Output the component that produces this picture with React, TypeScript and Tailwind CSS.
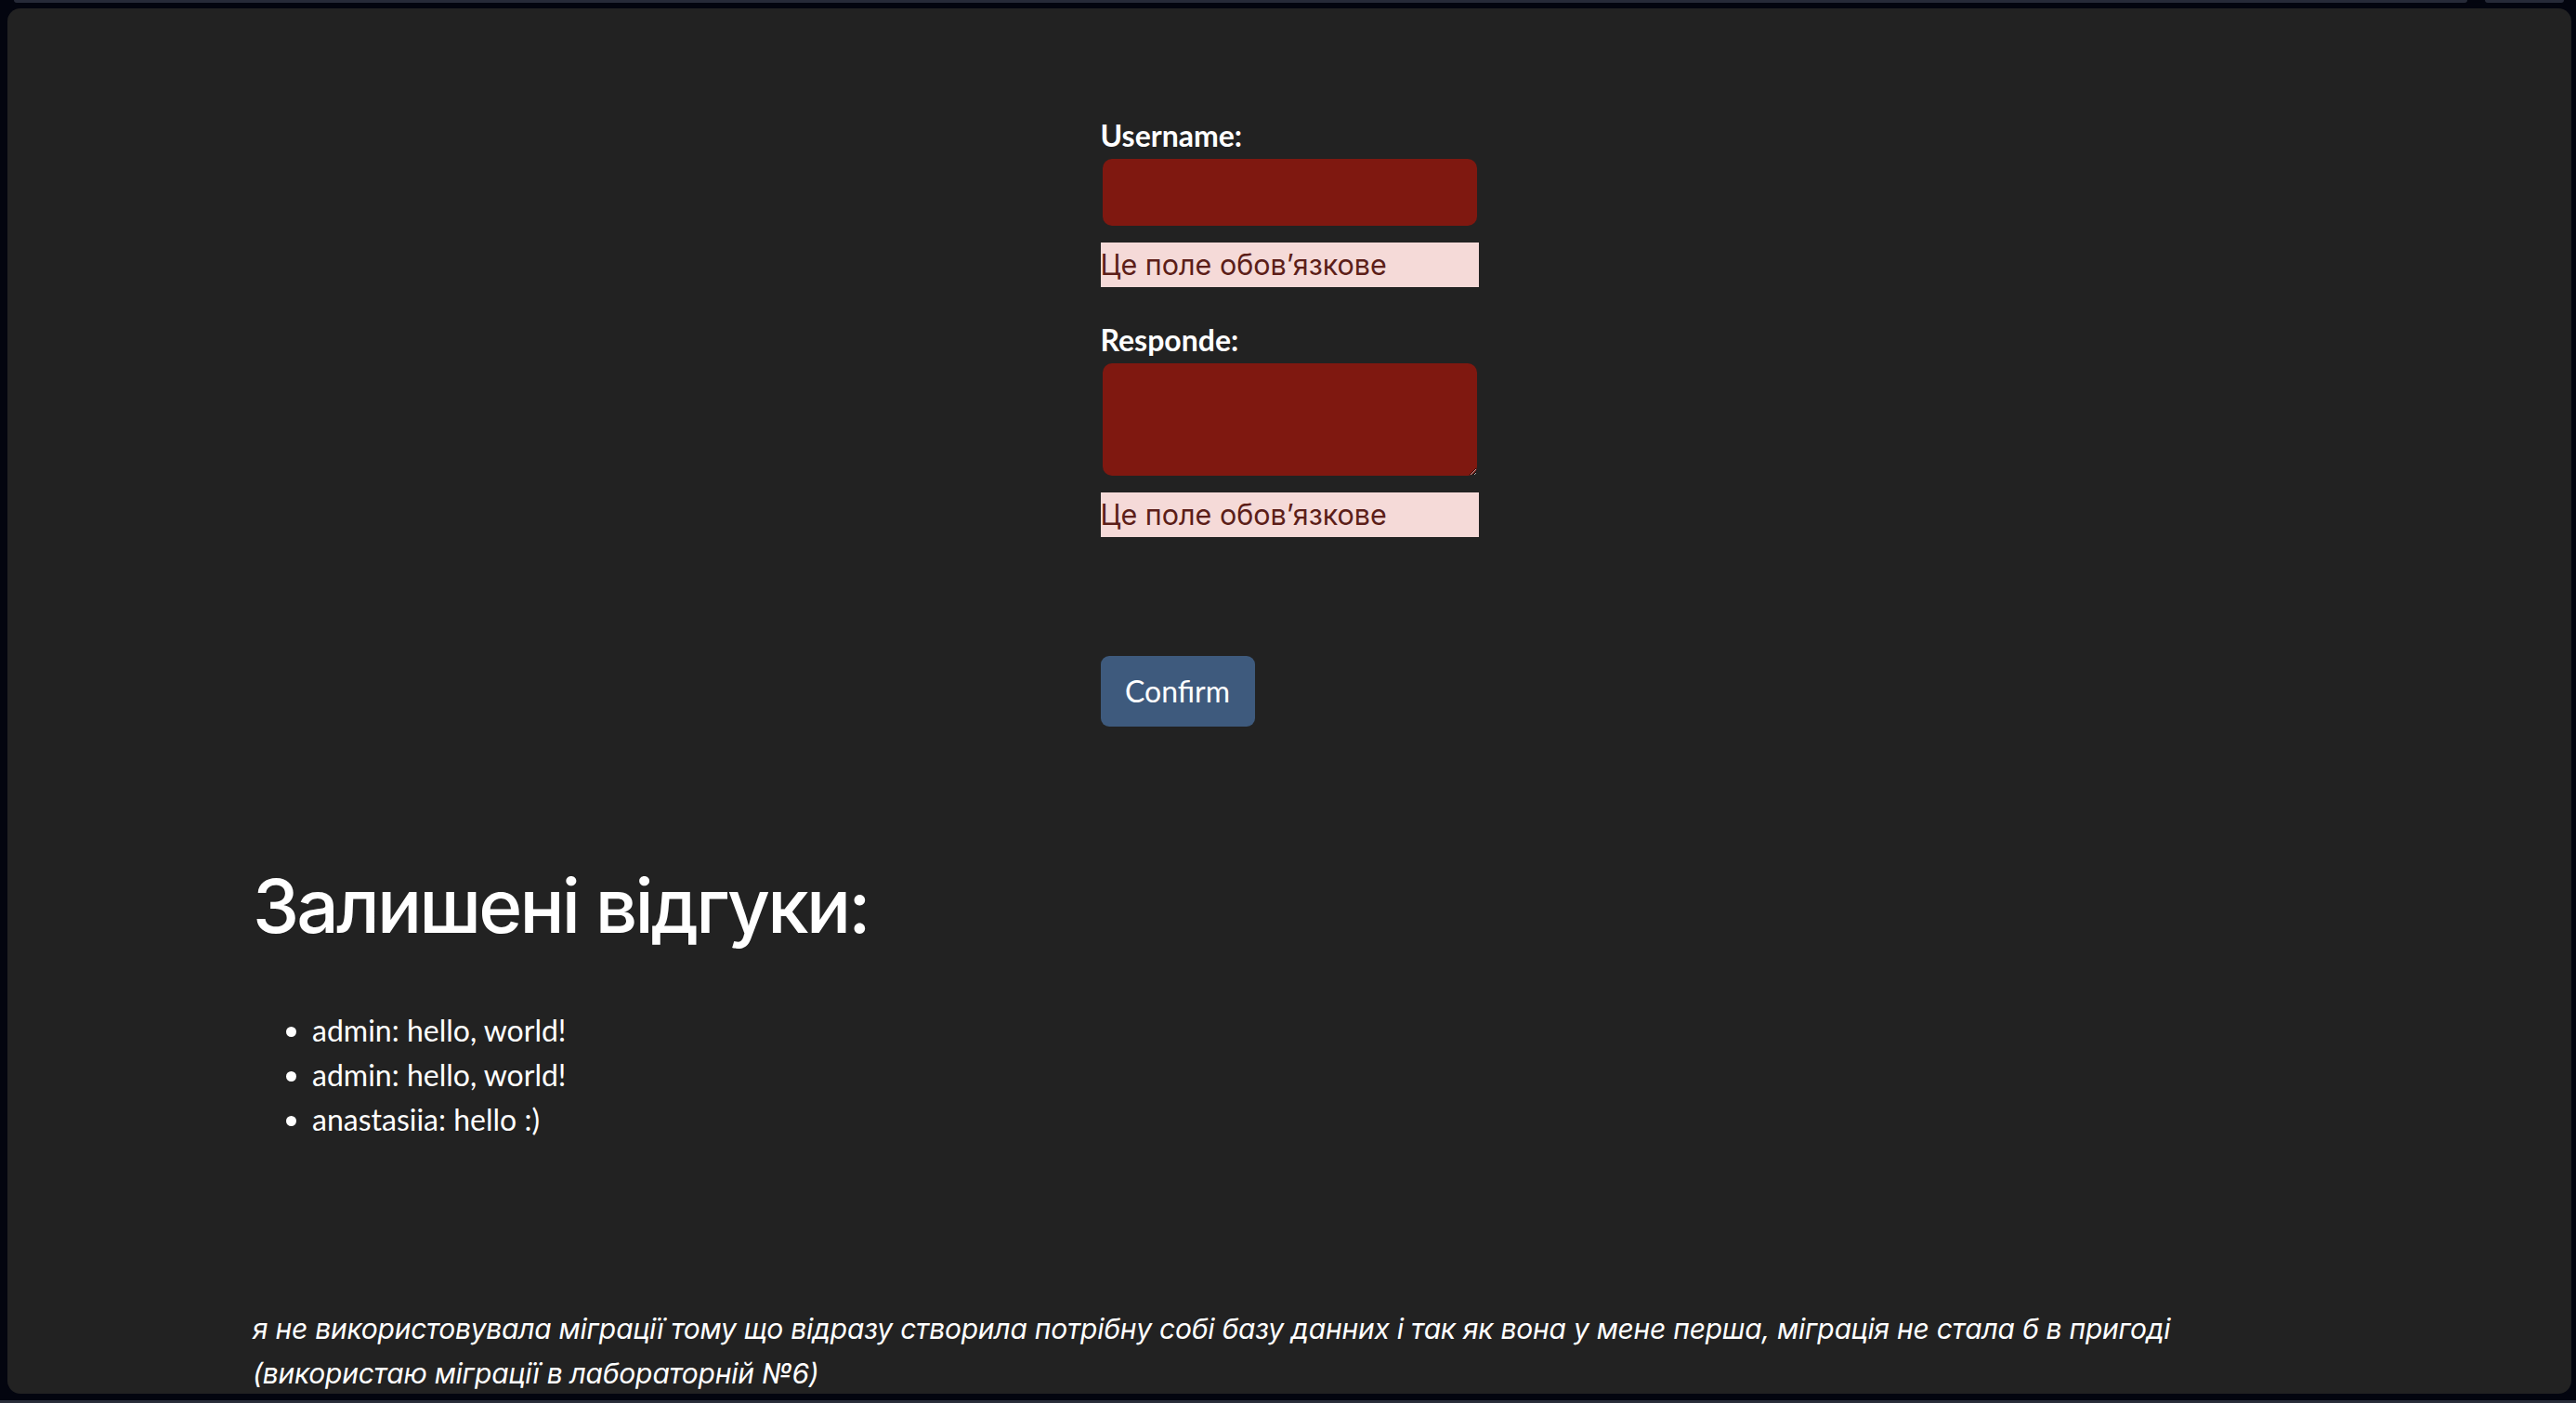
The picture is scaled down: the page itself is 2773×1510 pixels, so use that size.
const reviews = [
  { user: "admin", text: "hello, world!" },
  { user: "admin", text: "hello, world!" },
  { user: "anastasiia", text: "hello :)" },
]

const LATO = "font-['Lato','Noto_Sans',sans-serif]"
const CYR = "font-['Inter','Noto_Sans',sans-serif]"

const FieldError = () => (
  <div className={`mt-[18px] h-[48px] w-[407px] bg-[#f5dad8] text-[#5c1e19] text-[30.5px] leading-[48px] ${CYR}`}>
    Це поле обов’язкове
  </div>
)

export default function App() {
  return (
    <div className="h-[1510px] w-full overflow-hidden bg-[#03050f] flex flex-col">
      {/* browser tab strip */}
      <div className="h-[3px] flex gap-[19px] pl-[15px]">
        <div className="w-[2641px] h-full rounded-b-[6px] bg-[#262a38]" />
        <div className="w-[85px] h-full rounded-b-[6px] bg-[#262a38]" />
      </div>

      <div className="mt-[6px] mx-[8px] mr-[5px] h-[1491px] rounded-[14px] bg-[#222222] overflow-hidden">
        {/* form */}
        <div className="flex justify-center pt-[118px]">
          <form className="w-[407px] flex flex-col" onSubmit={(e) => e.preventDefault()}>
            <label className={`text-white font-bold text-[32px] leading-[38px] ${LATO}`}>Username:</label>
            <input className="mt-[6px] ml-[2px] w-[403px] h-[72px] rounded-[10px] bg-[#7f1810] outline-none" />
            <FieldError />

            <label className={`mt-[38px] text-white font-bold text-[32px] leading-[38px] ${LATO}`}>Responde:</label>
            <textarea className="mt-[6px] ml-[2px] w-[403px] h-[121px] rounded-[10px] bg-[#7f1810] outline-none resize-y" />
            <FieldError />

            <button
              type="submit"
              className={`mt-[128px] w-[166px] h-[76px] rounded-[9px] bg-[#3e5a7d] text-white text-[32px] ${LATO}`}
            >
              Confirm
            </button>
          </form>
        </div>

        {/* reviews */}
        <div className="pl-[264px] pr-[264px]">
          <h1 className={`mt-[153px] text-white font-medium text-[80px] leading-none tracking-[-2.8px] ${CYR}`}>
            Залишені відгуки:
          </h1>
          <ul className={`mt-[70px] list-disc pl-[64px] text-white text-[32px] leading-[48px] ${LATO}`}>
            {reviews.map((r, i) => (
              <li key={i}>
                {r.user}: {r.text}
              </li>
            ))}
          </ul>

          <p className={`mt-[177px] text-white italic text-[30px] leading-[48px] tracking-[-0.25px] ${CYR}`}>
            я не використовувала міграції тому що відразу створила потрібну собі базу данних і так як вона у мене перша, міграція не стала б в пригоді (використаю міграції в лабораторній №6)
          </p>
        </div>
      </div>

      <div className="mt-[7px] h-[3px] bg-[#2a2d3a]" />
    </div>
  )
}
